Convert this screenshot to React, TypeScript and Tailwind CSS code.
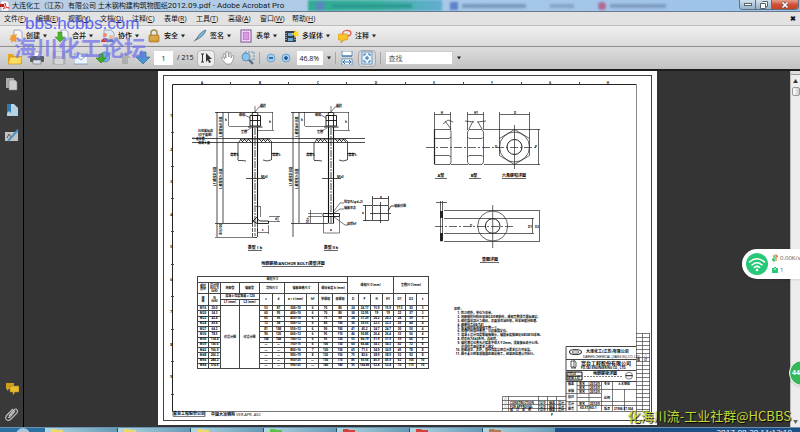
import type { ReactNode } from 'react';

const MENUS = [
    ['文件', 'F'],
    ['编辑', 'E'],
    ['视图', 'V'],
    ['文档', 'D'],
    ['注释', 'C'],
    ['表单', 'R'],
    ['工具', 'T'],
    ['高级', 'A'],
    ['窗口', 'W'],
    ['帮助', 'H'],
];

const ROWS = [
    ['M16', '20.0', '53', '87', '300×10', '6', '70', '80', '24', '26.17', '15.9', '15.9', '17.5', '30', '3'],
    ['M20', '34.3', '60', '95', '400×10', '6', '70', '80', '30', '32.95', '19', '19', '22', '37', '3'],
    ['M22', '42.4', '65', '95', '450×10', '6', '75', '90', '34', '37.29', '20.2', '20.2', '24', '39', '3'],
    ['M24', '49.4', '72', '98', '500×12', '6', '80', '100', '36', '39.55', '22.3', '22.3', '26', '44', '4'],
    ['M27', '64.2', '81', '108', '550×12', '6', '90', '100', '41', '45.2', '24.7', '24.7', '30', '50', '4'],
    ['M30', '78.5', '90', '120', '600×12', '6', '95', '110', '46', '50.85', '26.4', '26.4', '33', '56', '4'],
    ['M36', '114.4', '108', '144', '700×12', '6', '95', '120', '55', '60.79', '31.9', '31.9', '39', '66', '5'],
    ['M39', '136.6', '—', '—', '750×15', '6', '100', '130', '60', '66.44', '34.3', '34.3', '42', '72', '6'],
    ['M42', '156.9', '—', '—', '800×16', '7', '120', '130', '65', '71.3', '34.9', '34.9', '45', '78', '8'],
    ['M48', '206.2', '—', '—', '900×19', '8', '120', '150', '75', '82.6', '38.9', '38.9', '52', '92', '8'],
    ['M56', '284.2', '—', '—', '950×25', '—', '130', '170', '85', '93.56', '45.9', '45.9', '62', '105', '10'],
    ['M64', '374.6', '—', '—', '990×25', '—', '140', '180', '95', '104.86', '52.4', '52.4', '70', '115', '10'],
];

const NOTES = [
    ['1.', 313, '除注明外，单位为毫米。'],
    ['2.', 317, '地脚螺栓材料应采用Q235钢制作，螺帽垫圈须合国标规定。'],
    ['3.', 321, '螺栓露出部分之螺纹，表面须涂油防锈，应采用镀锌处理。'],
    ['4.', 325, '规格符合GB/T41'],
    ['5.', 328, '每支螺栓配双螺帽垫圈一个。'],
    ['6.', 331, '预埋时应保持垂直，以样板固定位。'],
    ['7.', 335, '混凝土设计强度等级按图示，锚固长度按规范GB50010采用。'],
    ['8.', 339, '焊条应为E43系列，连续焊。'],
    ['9.', 343, '锚栓埋设位置允许偏差不得大于2mm，须复核标高中心线。'],
    ['', 347, '并须符合规范要求之规定。'],
    ['10.', 350, '基础灌浆、养护，须待强度达到设计要求后方可安装。'],
    ['11.', 354, '图中未注明事项按国家规范施工，经现场监理认可执行。'],
] as [string, number, string][];

function Caret() {
    return (
        <svg viewBox="0 0 4 3" className="w-1 h-1 shrink-0" aria-hidden="true">
            <path d="M0 0H4L2 3Z" fill="#222" />
        </svg>
    );
}

function Icon({ children, className = '' }: { children: ReactNode; className?: string }) {
    return (
        <svg viewBox="0 0 14 14" className={`w-[14px] h-[14px] shrink-0 ${className}`} aria-hidden="true">
            {children}
        </svg>
    );
}

const TASKS: { label: string; icon: ReactNode }[] = [
    {
        label: '创建',
        icon: (
            <>
                <path d="M5 1h6l2 2v9H5z" fill="#f5f5f7" stroke="#8a8d95" strokeWidth=".7" />
                <path d="M4 4l1 2 3-1-1 3 3 1-3 1 0 3-3-1-2 2v-3l-2-1 2-1-1-3 2 1z" fill="#f39a35" />
            </>
        ),
    },
    {
        label: '合并',
        icon: (
            <>
                <path d="M6 1h5l2 2v8H6z" fill="#f2f4f8" stroke="#8992a5" strokeWidth=".7" />
                <path d="M3 3h4v5h3l-5 5-5-5h3z" fill="#4bb52b" stroke="#2e8518" strokeWidth=".5" />
            </>
        ),
    },
    {
        label: '协作',
        icon: (
            <>
                <path d="M3 1h7l3 3v6H3z" fill="#dfe7f2" stroke="#7b8eaa" strokeWidth=".7" />
                <circle cx="4" cy="6" r="2" fill="#e98b67" />
                <path d="M0 13c0-5 8-5 8 0z" fill="#c8423a" />
                <circle cx="10" cy="8" r="2" fill="#eab98c" />
                <path d="M7 13c0-4 6-4 6 0z" fill="#5679c2" />
            </>
        ),
    },
    {
        label: '安全',
        icon: (
            <>
                <path d="M4 7V4c0-4 6-4 6 0v3" fill="none" stroke="#a68d50" strokeWidth="1.5" />
                <rect x="2" y="6" width="10" height="7" rx="1" fill="#d19a35" stroke="#9b6d1c" strokeWidth=".6" />
                <path d="M3 8h8M3 10h8" stroke="#edc878" strokeWidth=".6" />
            </>
        ),
    },
    {
        label: '签名',
        icon: (
            <>
                <path d="M13 1c-4 1-7 4-9 8l1 1c4-2 7-5 8-9z" fill="#7fb0c9" stroke="#47738d" strokeWidth=".7" />
                <path d="M4 9l-4 4 5-3z" fill="#3f4e58" />
            </>
        ),
    },
    {
        label: '表单',
        icon: (
            <>
                <rect x="2" y="1" width="10" height="12" fill="#fff" stroke="#7d3f94" strokeWidth="1" />
                <rect x="4" y="3" width="6" height="8" fill="#d99be0" stroke="#a95dba" strokeWidth=".6" />
            </>
        ),
    },
    {
        label: '多媒体',
        icon: (
            <>
                <rect x="0" y="2" width="11" height="11" rx="1" fill="#34414d" />
                <path d="M3 4h5v3H3zM3 9h5v3H3z" fill="#6ba9d3" />
                <path d="M1 4v8M10 4v8" stroke="#dde" strokeWidth="1" strokeDasharray="1 1" />
                <path d="M10 0l1 3 3-1-1 3 1 2-3 0-1 2-1-3-3-1 3-1z" fill="#ffdc21" />
            </>
        ),
    },
    {
        label: '注释',
        icon: (
            <>
                <path d="M5 5c-2-4 8-5 8-1 0 3-3 3-4 3l-1 2" fill="none" stroke="#e2553d" strokeWidth="1.2" />
                <path d="M2 5h6q2 0 2 2v2q0 2-2 2H6l-3 3v-3H2q-2 0-2-2V7q0-2 2-2z" fill="#fcc326" stroke="#c88714" strokeWidth=".6" />
            </>
        ),
    },
];

function Tool({ label, className = '', children }: { label: string; className?: string; children: ReactNode }) {
    return (
        <button type="button" aria-label={label} className={`flex items-center justify-center shrink-0 ${className}`}>
            <Icon>{children}</Icon>
        </button>
    );
}

function Separator() {
    return <span className="w-px h-3 bg-[#a5a5a5] shrink-0" />;
}

function TitleBar() {
    return (
        <header className="relative flex items-center h-3 shrink-0 bg-linear-to-r from-[#bccfe4] via-[#a9c9e9] to-[#9cc2ea] border-b border-[#6b7a8a] overflow-hidden">
            <div className="absolute inset-y-0 left-[308px] w-[134px] bg-linear-to-r from-[#2fac92] via-[#39b19d] to-[#62aed2] flex items-center gap-2 px-2 blur-[1px]">
                <span className="w-2 h-2 bg-[#5d83c0]" />
                <span className="h-1 w-20 bg-[#2b9a92]" />
            </div>
            <div className="absolute inset-y-0 left-[450px] flex items-center gap-1 blur-[1px]">
                <span className="w-2 h-2 bg-[#5f83ca]" />
                <span className="h-1 w-16 bg-[#7b99be]" />
                <span className="h-1 w-6 ml-5 bg-[#86a5c8]" />
                <span className="w-2 h-2 ml-5 rounded-full bg-[#b06a90]" />
                <span className="h-1 w-14 bg-[#7f9dc1]" />
            </div>
            <svg viewBox="0 0 10 10" className="relative w-[10px] h-[10px] mr-[2px] shrink-0" aria-hidden="true">
                <path d="M1 0h6l2 2v8H1z" fill="#fff" stroke="#99a" strokeWidth=".5" />
                <path d="M0 3h4v3H0z" fill="#c8201d" />
                <path d="M3 8c2-2 3-5 2-6 0 3 2 5 4 5-2-1-4 0-6 1z" fill="none" stroke="#d22" strokeWidth=".8" />
            </svg>
            <h1 className="relative whitespace-nowrap text-[7px] leading-3 text-[#101820]">
                大连化工（江苏）有限公司 土木钢构建构筑物图纸
                <span className="text-[8px] font-['Roboto',sans-serif]">2012.09.pdf - Adobe Acrobat Pro</span>
            </h1>
            <div className="relative ml-auto mr-px self-start flex h-[10px] border border-[#5b7085] border-t-0 rounded-b-sm overflow-hidden">
                <button type="button" aria-label="最小化" className="w-4 flex items-center justify-center bg-linear-to-b from-[#d3e1ef] to-[#96b1cb] border-r border-[#5b7085]">
                    <span className="w-2 h-[3px] bg-white border border-[#566]" />
                </button>
                <button type="button" aria-label="还原" className="w-4 flex items-center justify-center bg-linear-to-b from-[#d3e1ef] to-[#96b1cb] border-r border-[#5b7085]">
                    <svg viewBox="0 0 8 8" className="w-2 h-2">
                        <path d="M2.500 .5h5v5h-2M.5 2.500h5v5h-5z" fill="#fff" stroke="#566" />
                    </svg>
                </button>
                <button type="button" aria-label="关闭" className="w-[26px] flex items-center justify-center bg-linear-to-b from-[#e4a08f] via-[#d0503a] to-[#c8401f]">
                    <svg viewBox="0 0 8 8" className="w-2 h-2">
                        <path d="M1.500 1.500l5 5M6.500 1.500l-5 5" stroke="#655" strokeWidth="3" />
                        <path d="M1.500 1.500l5 5M6.500 1.500l-5 5" stroke="#fff" strokeWidth="1.700" />
                    </svg>
                </button>
            </div>
        </header>
    );
}

function Toolbars() {
    return (
        <>
            <nav className="flex items-center h-[13px] shrink-0 px-1 gap-[9px] bg-[#e2e2e2] text-[7px] leading-3 text-[#151515]">
                {MENUS.map(([name, key]) => (
                    <button type="button" key={key} className="whitespace-nowrap w-[23px] text-left">
                        {name}(<u>{key}</u>)
                    </button>
                ))}
                <button type="button" aria-label="关闭文档" className="ml-auto text-[7px] font-bold">
                    ✖
                </button>
            </nav>
            <div className="flex items-center h-[22px] shrink-0 px-[9px] gap-2 border-t border-b border-t-[#bdbdbd] border-b-[#8c8c8c] bg-linear-to-b from-[#f0f0f0] to-[#dadada]">
                {TASKS.map((t) => (
                    <button type="button" key={t.label} className="flex items-center gap-[3px] text-[7px] leading-3 font-medium text-[#111] whitespace-nowrap">
                        <Icon>{t.icon}</Icon>
                        {t.label}
                        <Caret />
                    </button>
                ))}
            </div>
            <div className="flex items-center h-[22px] shrink-0 px-2 bg-linear-to-b from-[#dedede] to-[#c2c2c2] text-[#111]">
                <div className="flex items-center gap-2">
                    <Tool label="打开">
                        <path d="M0 3h5l1 2h8v8H0z" fill="#e5a91d" />
                        <path d="M2 6h12l-1 7H0z" fill="#fcdc61" stroke="#c08b16" strokeWidth=".6" />
                    </Tool>
                    <Tool label="打印">
                        <path d="M3 1h8v5H3z" fill="#fff" stroke="#778" strokeWidth=".6" />
                        <rect x="0" y="5" width="14" height="6" rx="1" fill="#596069" />
                        <path d="M3 9h8v4H3z" fill="#dde4ee" stroke="#667" strokeWidth=".6" />
                    </Tool>
                    <Tool label="保存" className="opacity-40">
                        <path d="M1 1h12v12H1z" fill="#9ba0a8" stroke="#777" />
                        <path d="M4 1h6v4H4zM3 8h8v5H3z" fill="#e6e8ec" />
                    </Tool>
                    <Tool label="电子邮件">
                        <path d="M0 3h14v10H0z" fill="#edf5fc" stroke="#6d95be" strokeWidth=".8" />
                        <path d="M0 3l7 6 7-6" fill="none" stroke="#6d95be" strokeWidth=".8" />
                    </Tool>
                    <Tool label="上载">
                        <circle cx="9" cy="6" r="5" fill="#6fb0df" stroke="#2f72a9" strokeWidth=".6" />
                        <path d="M5 3l5 5H7v4H3V8H0z" transform="rotate(180 5 7.500)" fill="#42ae24" stroke="#28780f" strokeWidth=".6" />
                    </Tool>
                </div>
                <div className="flex items-center gap-1 ml-2">
                    <Tool label="上一页" className="opacity-35">
                        <path d="M7 1l6 6h-3v6H4V7H1z" fill="#777" />
                    </Tool>
                    <Tool label="下一页">
                        <path d="M4 1h6v5h4l-7 7-7-7h4z" fill="#4c94d0" stroke="#236299" strokeWidth=".6" />
                    </Tool>
                    <input aria-label="页码" defaultValue="1" className="w-[19px] h-[14px] bg-white text-center text-[7px] outline-none" />
                    <span className="text-[7px] whitespace-nowrap">/ 215</span>
                </div>
                <div className="flex items-center gap-[6px] ml-1">
                    <Tool label="选择工具" className="w-[18px] h-[17px] rounded-sm border border-[#b5b5b5] bg-[#ededed]">
                        <path d="M2 3h3M3.500 3v8M2 11h3" stroke="#333" strokeWidth="1" />
                        <path d="M7 2v9l2-2 1 3 2-1-2-3h3z" fill="#333" />
                    </Tool>
                    <Tool label="手形工具">
                        <path d="M4 8L1 6q-1 1 0 2l4 5h5q2-3 3-8-1-1-2 0l-1 2V2q-1-1-2 0v4L7 1Q6 0 5 1v6L4 3Q3 2 2 3z" fill="#fff" stroke="#777" strokeWidth=".6" />
                    </Tool>
                    <Tool label="选框缩放">
                        <rect x="4" y="1" width="9" height="8" fill="none" stroke="#6d93b8" strokeDasharray="2 1" />
                        <circle cx="5" cy="6" r="4" fill="#8fc4ea" stroke="#5a90bb" />
                        <path d="M8 9l4 4" stroke="#567" strokeWidth="2" />
                    </Tool>
                </div>
                <div className="flex items-center gap-1 ml-1">
                    <Separator />
                    <div className="flex items-center gap-px">
                        <Tool label="缩小">
                            <circle cx="7" cy="7" r="4" fill="#a6cdee" stroke="#6fa3cf" />
                            <path d="M5 7h4" stroke="#164f85" strokeWidth="1.500" />
                        </Tool>
                        <Tool label="放大">
                            <circle cx="7" cy="7" r="4" fill="#a6cdee" stroke="#6fa3cf" />
                            <path d="M5 7h4M7 5v4" stroke="#164f85" strokeWidth="1.500" />
                        </Tool>
                    </div>
                    <input aria-label="缩放比例" defaultValue="46.8%" className="w-[26px] h-[14px] pl-[2px] bg-white text-[7px] outline-none" />
                    <Caret />
                </div>
                <div className="flex items-center gap-1 ml-1">
                    <Separator />
                    <Tool label="适合宽度">
                        <path d="M2 0h10v5H2zM2 8h10v6H2z" fill="#fff" stroke="#4d86b8" strokeWidth=".8" />
                        <path d="M2 5h10M3 11h8M5 9l-2 2 2 2M9 9l2 2-2 2" fill="none" stroke="#2c70ac" />
                    </Tool>
                    <Tool label="适合页面" className="w-[18px] h-[17px] rounded-sm border border-[#aaa] bg-[#d8d8d8]">
                        <rect x="2" y="1" width="10" height="12" fill="#e8f3fc" stroke="#4d86b8" strokeWidth=".8" />
                        <path d="M4 5V3h2M8 3h2v2M10 9v2H8M6 11H4V9M5 7h4M7 5v4" fill="none" stroke="#2c70ac" />
                    </Tool>
                    <Separator />
                    <input aria-label="查找" placeholder="查找" className="w-[68px] h-[14px] px-[2px] bg-white border border-[#ccc] text-[7px] placeholder:text-[#555] outline-none" />
                    <Caret />
                </div>
            </div>
        </>
    );
}

function HeadCell({ children, ...rest }: { children: ReactNode; colSpan?: number; rowSpan?: number }) {
    return (
        <th className="border border-[#444] p-0 font-bold overflow-hidden whitespace-nowrap" {...rest}>
            {children}
        </th>
    );
}

function BoltTable() {
    return (
        <table className="table-fixed border-collapse w-[232px] h-[93px] text-[3px] leading-[3px] text-center text-black font-bold">
            <colgroup>
                <col className="w-[11px]" />
                <col className="w-[12px]" />
                <col className="w-[19px]" />
                <col className="w-[20px]" />
                <col className="w-[13px]" />
                <col className="w-[12px]" />
                <col className="w-[22px]" />
                <col className="w-[12px]" />
                <col className="w-[14px]" />
                <col className="w-[15px]" />
                <col className="w-[11px]" />
                <col className="w-[12px]" />
                <col className="w-[12px]" />
                <col className="w-[11px]" />
                <col className="w-[12px]" />
                <col className="w-[11px]" />
                <col className="w-[12px]" />
            </colgroup>
            <thead>
                <tr className="h-[6px]">
                    <HeadCell colSpan={10}>螺栓尺寸</HeadCell>
                    <HeadCell colSpan={4} rowSpan={2}>螺帽尺寸(mm)</HeadCell>
                    <HeadCell colSpan={3} rowSpan={2}>垫圈尺寸(mm)</HeadCell>
                </tr>
                <tr className="h-[11px]">
                    <HeadCell>螺栓<br />直径</HeadCell>
                    <HeadCell>设计值<br />抗拉力<br />(kN)</HeadCell>
                    <HeadCell>地脚型</HeadCell>
                    <HeadCell>锚板型</HeadCell>
                    <HeadCell colSpan={2}>弯钩尺寸</HeadCell>
                    <HeadCell colSpan={2}>锚板规格尺寸</HeadCell>
                    <HeadCell colSpan={2}>螺纹长度 b (mm)</HeadCell>
                </tr>
                <tr className="h-[6px]">
                    <HeadCell rowSpan={2}>规<br />格</HeadCell>
                    <HeadCell rowSpan={2}>N<br />(kN)</HeadCell>
                    <HeadCell colSpan={2}>混凝土强度等级 ≥ C20</HeadCell>
                    {['c', 'd', 'a × t (mm)', 'hf', '单螺帽', '双螺帽', 'D', 'P', 'H', 'H1', 'D1', 'D2', 't'].map((h) => (
                        <HeadCell key={h} rowSpan={2}>{h}</HeadCell>
                    ))}
                </tr>
                <tr className="h-[6px]">
                    <HeadCell>L1 (mm)</HeadCell>
                    <HeadCell>L2 (mm)</HeadCell>
                </tr>
            </thead>
            <tbody>
                {ROWS.map((row, i) => (
                    <tr key={row[0]}>
                        {row.slice(0, 2).map((v, j) => (
                            <td key={j} className="border border-[#444] p-0">{v}</td>
                        ))}
                        {i === 0 && (
                            <>
                                <td rowSpan={12} className="border border-[#444] p-0">详设计图</td>
                                <td rowSpan={12} className="border border-[#444] p-0">详设计图</td>
                            </>
                        )}
                        {row.slice(2).map((v, j) => (
                            <td key={j} className="border border-[#444] p-0">{v}</td>
                        ))}
                    </tr>
                ))}
            </tbody>
        </table>
    );
}

// Parts shared by both anchor bolt elevations, drawn around the shaft axis x = 0
function BoltHead() {
    return (
        <>
            <path d="M-40 112.500H0M-38 112V237M-32 112V223M-40 223.500H-3" strokeWidth=".8" />
            <path d="M3 112.500H18M17.500 112V130M3 130.500H19M-26.500 112V126M-26 126.500H-5M0 106V112L4 107H9M-10 115L-5 118M-9 131L-4 128" />
            <path d="M-2.500 112.500H2.500L3 115.500H-3zM-5 115.500H5.500V126H-5zM-5 120.500H5.500M-2.500 116V126M2.500 116V126M-7 127H7.500" stroke="#111" strokeWidth=".9" />
            <path d="M-2.500 127V223M2.500 127V223" stroke="#111" strokeWidth="1.100" />
            <path d="M0 128V223" stroke="#111" strokeWidth=".8" strokeDasharray="7 1 2 1" />
            <path d="M-16 142L-14 139H14L17 142M-17 142V160M16.500 142V160M-24 153.500H-17M16 153.500H24M-17 160.500H-13L-9 161M8 160L12 161L16 160M-9 178.500H10" strokeWidth=".8" />
            <path d="M-15 139l3 3M-11 139l3 3M-7 139l3 3M4 139l3 3M8 139l3 3M12 139l3 3M-13 142l3-3M-9 142l3-3M6 142l3-3M10 142l3-3" strokeWidth=".9" />
            <g fill="#000" stroke="none" fontSize="3" fontWeight="bold">
                <text x="5" y="107">螺栓</text>
                <text x="-16" y="116">螺帽</text>
                <text x="-14" y="133">垫圈</text>
                <text x="-25" y="156">混凝土</text>
                <text x="17" y="156">混凝土</text>
                <text x="6" y="178">M(d)</text>
                <text x="-30" y="121">b</text>
                <text x="14" y="123">h</text>
                <text transform="translate(-33 137) rotate(-90)">L 螺栓标示长度</text>
                <text transform="translate(-33 189) rotate(-90)">L 螺栓埋入长度</text>
                <text transform="translate(-39 186) rotate(-90)">L1 螺栓总长度</text>
            </g>
        </>
    );
}

function Sheet() {
    const tops = [230, 288, 346, 405, 463, 521, 579];
    const sides = [132, 166, 198, 231, 264, 296, 329, 361, 394];
    return (
        <svg viewBox="158 71 499 354" className="h-full max-w-full bg-white" role="img" aria-label="地脚螺栓类型详图">
            <g fill="none" stroke="#444" strokeWidth="1">
                <rect x="163.500" y="75.500" width="488" height="345" />
                <path d="M172.500 411.500V84.500H636.500" stroke="#222" />
                <path d="M172.500 411.500H650" stroke="#777" />
                <path d="M636.500 84V411.500" stroke="#888" />
                {tops.map((x) => <path key={x} d={`M${x}.500 82V85`} />)}
                {sides.map((y) => <path key={y} d={`M171 ${y}.500H174`} />)}
            </g>
            <g fontSize="3" fontWeight="bold" textAnchor="middle">
                {'ABCDEFGH'.split('').map((c, i) => <text key={c} x={202 + i * 58} y="84">{c}</text>)}
                {[117, 151, 183, 216, 248, 281, 313, 346, 378].map((y, i) => <text key={y} x="171" y={y}>{i + 1}</text>)}
            </g>

            <g fill="none" stroke="#222" strokeWidth=".6">
                <path d="M192 138.500H365M192 142.500H365" strokeWidth=".8" />
                <g transform="translate(255 0)"><BoltHead /></g>
                <g transform="translate(331 0)"><BoltHead /></g>
                {/* hooked end */}
                <path d="M252.500 223V237.500H257.500V224M255 223V236" strokeWidth=".8" strokeDasharray="4 1" />
                <path d="M258 216L253 221L257 223.500H268.500V221H260L257.500 219" stroke="#111" strokeWidth=".9" />
                <path d="M215 237.500H253M260.500 206V217M256 206.500H260M269 216.500H280M269 221.500H280M278 216V221M257 232.500H268.500M268.500 225V234M257.500 226V234" />
                {/* plate end */}
                <path d="M323 213.500H339.500V216.500H323z" stroke="#111" strokeWidth=".9" />
                <path d="M308 213.500H322M308 216.500H322M310.500 210V223M323.500 217V233H339.500V217M328.500 223.500H334M334 211L340 203H344M334 213L340 209H344M334 217L345 225H348" />
                <path d="M372.500 205.500H388.500V220.500H372.500zM372.500 196V205M388.500 196V205M372.500 198.500H388.500M363 205.500H372M363 220.500H372M365.500 205V221M380.500 202V223M370 213.500H391M388 211L391 206H394" strokeWidth=".8" />
            </g>
            <g fontSize="4" fontWeight="bold">
                <g fontSize="3">
                    <text x="198" y="132">柱底板标高</text>
                    <text x="198" y="136">(详平面图)</text>
                    <text x="192" y="140">▽ 灌浆层</text>
                    <text x="198" y="144">混凝土面</text>
                    <text x="344" y="203">预留孔(φd+2)</text>
                    <text x="344" y="209">锚板见表</text>
                    <text x="347" y="225">满焊hf</text>
                    <text x="394" y="207">锚板详图</text>
                    <text x="380" y="198">a</text>
                    <text x="362" y="214">a</text>
                    <text x="262" y="231">c</text>
                    <text x="330" y="231">a</text>
                    <text x="275" y="220">d</text>
                    <text transform="translate(222 235) rotate(-90)">余长100</text>
                    <text transform="translate(309 223) rotate(-90)">50 t</text>
                </g>
                <g textAnchor="middle">
                    <text x="255" y="249">类型Ⅰb</text>
                    <text x="331" y="249">类型Ⅱb</text>
                    <text x="293" y="265">地脚螺栓(ANCHOR BOLT)类型详图</text>
                    <text x="441" y="177">A型</text>
                    <text x="474" y="177">B型</text>
                    <text x="514" y="177">六角螺帽详图</text>
                    <text x="490" y="261">垫圈详图</text>
                    <g fontSize="3">
                        <text x="442" y="114">H</text>
                        <text x="476" y="114">H1</text>
                        <text x="515" y="114">D</text>
                        <text x="496" y="148">D</text>
                        <text x="536" y="148">P</text>
                        <text x="471" y="227">D</text>
                        <text x="530" y="228">D1</text>
                        <text x="537" y="228">D2</text>
                    </g>
                </g>
            </g>
            <g fill="none" stroke="#222" strokeWidth=".7">
                <path d="M248 250.500H262M324 250.500H338M262 266.500H323M435 178.500H447M469 178.500H481M502 178.500H526M480 262.500H499" />
                {/* nuts */}
                <path d="M434.500 112V164.500H450L451 162V131L450 129.500H434.500M435 138.500H449L451 137M435 155.500H449L451 157M434.500 114.500H450.500M450.500 112V130" />
                <path d="M434.500 129.500V164" strokeWidth="1.200" />
                <path d="M469 129.500H482L483.500 132V162L482 164.500H469L467.500 162V132zM467.500 137L469 138.500H482L483.500 137M467.500 157L469 155.500H482L483.500 157M467.500 112V130M483.500 112V130M467.500 114.500H483.500" />
                <path d="M443 124L448 120L453 122M445 121L451 129M465 121L474 122M469 129L473 121M478 122L482 129M477 122L486 121" />
                <path d="M451 164.500H468M484 129.500H540M484 164.500H540M538.500 129V165M499.500 112V139M529.500 112V139M499.500 114.500H529.500" />
                <circle cx="514.500" cy="147" r="15" />
                <circle cx="514.500" cy="147" r="7.500" strokeWidth="1" />
                <path d="M514.500 129.500L529.500 138.500V155.500L514.500 164.500L499.500 155.500V138.500zM514.500 125V169" />
                <path d="M426 147.500H538" strokeDasharray="8 2 2 2" />
                {/* washer */}
                <path d="M440.500 201V241H442.500V201M436 202.500H447M444 210.500H540M444 241.500H540M539.500 211V241M444 218.500H534M444 233.500H534M532.500 218V233M492.700 205V248" />
                <path d="M441.500 211V218M441.500 233V241" strokeWidth="3" />
                <circle cx="492.700" cy="226" r="15" />
                <circle cx="492.700" cy="226" r="7.300" strokeWidth="1" />
                <path d="M435 226.500H513" strokeDasharray="8 2 2 2" />
            </g>

            <foreignObject x="197" y="276" width="233" height="95">
                <BoltTable />
            </foreignObject>

            <g fontSize="3" fontWeight="bold">
                <text x="454" y="310">说明 :</text>
                {NOTES.map(([no, y, text]) => (
                    <g key={y}>
                        <text x="460" y={y + 1} textAnchor="end">{no}</text>
                        <text x="461" y={y + 1}>{text}</text>
                    </g>
                ))}
            </g>

            <g fill="none" stroke="#444" strokeWidth=".7">
                {/* revision strip and title block grid */}
                <path d="M636 333.500H650M642.500 333V411M649.500 333V411" />
                {Array.from({ length: 19 }, (_, i) => <path key={i} d={`M636 ${337 + i * 4}.500H650`} />)}
                <path d="M566 411V346.500H636M566 359.500H636M566 370.500H636M566 381.500H636" strokeWidth="1" />
                <path d="M577 381V411M589 381V411M601.500 381V411M612.500 381V411M624.500 389V411" />
                <path d="M577 385.500H601M577 389.500H636M577 393.500H601M577 397.500H601M566 401.500H636M577 405.500H612M566 393.500H577M612 405.500H636" />
                <path d="M502.500 411V396.500H566M502 400.500H566M502 404.500H566M502 408.500H566M508.500 396V411M538.500 396V411M547.500 396V411M556.500 396V411" />
                <path d="M584 376.500H622" strokeDasharray="2 1" />
                <ellipse cx="575.500" cy="352" rx="6" ry="2.500" strokeWidth="1.200" />
                <ellipse cx="575.500" cy="352" rx="3.500" ry="1.200" />
                <path d="M571 361h3v6h-3zM574 360l2 2v5l-2 1M571 368h5" stroke="#111" />
                <circle cx="629" cy="375.700" r="3.500" />
                <path d="M625.500 375.700H632.500M567 372H582V380H567zM567 376H582" stroke="#111" strokeWidth="1" />
                <path d="M173 416.500H205V411M173 411V416" />
            </g>
            <g fontWeight="bold" fontSize="3">
                <text x="586" y="353" fontSize="4">大连化工(江苏)有限公司</text>
                <text x="583" y="358" className="font-['Liberation_Sans',sans-serif]" fontWeight="normal">DAIREN CHEMICAL (JIANG SU) CO.,LTD.</text>
                <text x="581" y="365" fontSize="5">富台工程股份有限公司</text>
                <text x="581" y="369">FU-TAI ENGINEERING CO., LTD.</text>
                <text x="593" y="375" fontSize="4">地脚螺栓详图</text>
                <text x="568" y="375">TITLE</text>
                <text x="568" y="379">建筑工程</text>
                {[385, 392, 398, 405, 410].map((y, i) => <text key={y} x="568" y={y}>{['核准', '审核', '校对', '设计', '图号'][i]}</text>)}
                {[385, 389, 393, 405].map((y) => (
                    <g key={y}>
                        <text x="579" y={y}>签名</text>
                        <text x="590" y={y}>2012/9</text>
                    </g>
                ))}
                <text x="604" y="385">专业</text>
                <text x="604" y="399">比例</text>
                <text x="604" y="410">版次</text>
                <text x="618" y="385">土木钢构</text>
                <text x="580" y="409">SD-ST-NO.1</text>
                <text x="614" y="410">21906-ST-504</text>
                <text x="637" y="361">修</text>
                <text x="644" y="361">订</text>
                <text x="644" y="357">△</text>
                <text x="504" y="400">△</text>
                <text x="504" y="404">△</text>
                <text x="504" y="408">△</text>
                <text x="510" y="404">CONSTRUCTION</text>
                <text x="510" y="408">FOR APPROVAL</text>
                <text x="510" y="411">修　订　说　明</text>
                {[404, 408, 411].map((y) => (
                    <g key={y}>
                        <text x="539" y={y}>12/9</text>
                        <text x="549" y={y}>核准</text>
                        <text x="558" y={y}>设计</text>
                    </g>
                ))}
                <text x="173" y="415" fontSize="4">富台工程股份公司</text>
                <text x="211" y="416" fontSize="4">中国大冶钢构 <tspan fontWeight="normal">VER.APR. ASC</tspan></text>
                <text x="551" y="416">P</text>
            </g>
        </svg>
    );
}

function NavPane() {
    return (
        <aside className="flex flex-col items-center w-6 shrink-0 border-r border-black bg-[#393939] py-[6px] gap-3">
            <Tool label="页面">
                <path d="M1 1h8v10H1z" fill="#aaa" />
                <path d="M4 3h6l2 2v8H4z" fill="#cfcfcf" stroke="#888" strokeWidth=".6" />
            </Tool>
            <Tool label="书签">
                <path d="M2 1h7l4 4v8H2z" fill="#b8d2e4" />
                <path d="M2 1h4v9L4 8l-2 2z" fill="#2f79b0" />
            </Tool>
            <Tool label="签名">
                <path d="M0 3h13v9H0z" fill="#c3c3c0" />
                <path d="M2 9l2-4 2 3 3-2" fill="none" stroke="#555" />
                <path d="M13 1L3 12" stroke="#4d94c7" strokeWidth="2" />
            </Tool>
            <Tool label="注释" className="mt-auto">
                <path d="M1 2h8v6H4l-2 2V8H1z" fill="#cf9e1e" />
                <path d="M5 5h9v6h-4l-2 3v-3H5z" fill="#e6bd31" stroke="#a87c12" strokeWidth=".6" />
            </Tool>
            <Tool label="附件">
                <path d="M4 9l5-6q2-2 3 0 1 1 0 3l-6 6q-3 3-5 0-1-2 1-4l6-6M10 4L5 10q-1 1-2 0" fill="none" stroke="#bbb" strokeWidth="1.200" />
            </Tool>
        </aside>
    );
}

function TaskBar() {
    const items = ['#efd96a', '#efd96a', '#efd96a', '#5dc148', '#d7413b', '#d7413b', '#b77855'];
    return (
        <footer className="flex h-[5px] shrink-0 overflow-hidden bg-[#1d4f87] border-t border-[#6a91af]">
            <div className="w-[45px] shrink-0 bg-[#2a719f]">
                <div className="mx-auto w-[14px] h-2 rounded-t-full bg-[#a8c5dc]" />
            </div>
            {items.map((color, i) => (
                <div key={i} className="w-[73px] shrink-0 pl-[6px] border-r border-[#28516e] bg-linear-to-r from-[#b2d8df] to-[#6599b7]">
                    <svg viewBox="0 0 12 4" className="w-3 h-1" aria-hidden="true">
                        <path d="M0 1h5l1 1h6v2H0z" fill={color} />
                    </svg>
                </div>
            ))}
            <time className="ml-auto mr-2 text-[8px] leading-2 text-white whitespace-nowrap">2017-08-20 11:13:10</time>
        </footer>
    );
}

export default function App() {
    return (
        <div className="relative flex flex-col h-screen overflow-hidden bg-[#343434] font-['Open_Sans','Noto_Sans_CJK_SC',sans-serif]">
            <TitleBar />
            <Toolbars />
            <main className="flex flex-1 min-h-0 border-t-2 border-[#1d1d1d]">
                <NavPane />
                <div className="flex flex-1 min-w-0 justify-center pb-[2px]">
                    <Sheet />
                </div>
                <div className="flex flex-col items-center w-[10px] shrink-0 bg-[#ededed] border-l border-[#bbb]">
                    <span className="w-full h-1 border-b border-[#999] bg-[#ddd]" />
                    <span className="h-3 text-[5px] leading-3 text-[#333]">▲</span>
                    <span className="w-2 h-[9px] rounded-xs border border-[#999] bg-linear-to-r from-white to-[#ccc]" />
                    <span className="mt-auto h-3 text-[5px] leading-3 text-[#666]">▼</span>
                </div>
            </main>
            <TaskBar />

            {/* Forum watermarks */}
            <p className="absolute left-[25px] top-[14px] text-[17px] leading-5 text-[#4050f5]/85 font-['Liberation_Sans',sans-serif] pointer-events-none">
                bbs.hcbbs.com
            </p>
            <p className="absolute left-[14px] top-[34px] text-[22px] leading-6 font-bold text-[#7375e8]/75 pointer-events-none whitespace-nowrap font-['Noto_Sans_CJK_SC',sans-serif]">
                海川化工论坛
            </p>
            <p className="absolute right-[9px] bottom-2 text-[13px] leading-4 text-[#c5d936] text-shadow-[1px_1px_1px_#000] whitespace-nowrap pointer-events-none font-['Noto_Sans_CJK_SC',sans-serif]">
                化海川流-工业社群@HCBBS
            </p>

            {/* Network speed widget */}
            <div className="absolute right-0 top-[249px] w-[58px] h-[30px] pl-1 flex items-center gap-1 overflow-hidden rounded-l-full bg-white shadow">
                <svg viewBox="0 0 22 22" className="w-[22px] h-[22px] shrink-0" aria-hidden="true">
                    <circle cx="11" cy="11" r="11" fill="#27c878" />
                    <path d="M3.500 9q7.500-6.500 15 0M6 12q5-4.500 10 0M8.300 14.500q2.700-2.300 5.400 0" fill="none" stroke="#fff" strokeWidth="1.500" strokeLinecap="round" />
                    <circle cx="11" cy="17" r="1.300" fill="#fff" />
                </svg>
                <div className="flex flex-col gap-1 text-[6px] leading-2 text-[#555]">
                    <span className="flex items-center gap-[2px] whitespace-nowrap">
                        <svg viewBox="0 0 6 8" className="w-[6px] h-2 shrink-0">
                            <path d="M2 1v6L0 5" fill="none" stroke="#27b86b" strokeWidth="1.300" />
                            <path d="M4 7V1l2 2" fill="none" stroke="#ee7b30" strokeWidth="1.300" />
                        </svg>
                        0.00K/s
                    </span>
                    <span className="flex items-center gap-[2px]">
                        <svg viewBox="0 0 6 8" className="w-[6px] h-2 shrink-0">
                            <path d="M0 2h2V1h2v1h2v5H0z" fill="#27c878" />
                            <path d="M2 3h2" stroke="#fff" />
                        </svg>
                        1
                    </span>
                </div>
            </div>
            <button type="button" className="absolute -right-[15px] top-[360px] w-[26px] h-[26px] rounded-full border border-white bg-[#35b858] pl-[2px] text-left text-[7px] leading-6 font-bold text-white shadow">
                44
            </button>
        </div>
    );
}
